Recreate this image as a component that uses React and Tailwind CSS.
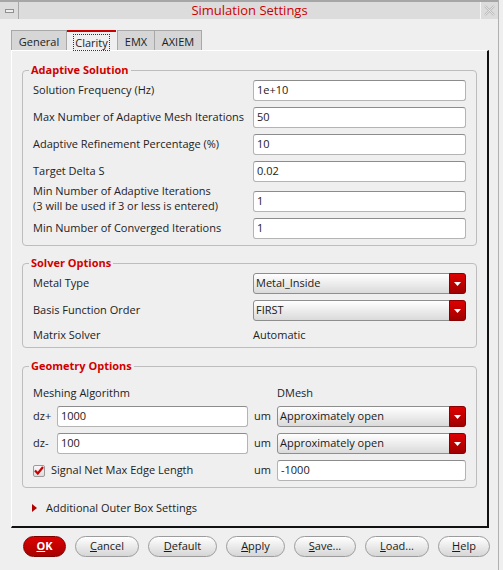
import React from 'react';

const font = { fontFamily: '"Open Sans", "Noto Sans", sans-serif' };

const TextBox = ({ value, className = '' }) => (
  <div className={`h-[21px] bg-white border border-[#b4b4b4] border-t-[#8c8c8c] rounded-[3px] flex items-center pl-[3px] text-[#1a1a1a] ${className}`}>
    {value}
  </div>
);

const Combo = ({ value, className = '' }) => (
  <div className={`h-[21px] flex rounded-[3px] border border-[#8e8e8e] bg-linear-to-b from-white to-[#dadada] ${className}`}>
    <div className="flex-1 flex items-center pl-[2px] text-[#1a1a1a]">{value}</div>
    <div className="w-[17px] -my-px -mr-px rounded-r-[3px] bg-linear-to-b from-[#e00000] to-[#a00000] border border-[#8a0000] flex items-center justify-center">
      <svg width="7" height="4" viewBox="0 0 7 4"><path d="M0 0h7L3.5 4z" fill="#fff" /></svg>
    </div>
  </div>
);

const Group = ({ title, className = '', children }) => (
  <fieldset className={`border border-[#bdbdbd] rounded-[4px] px-[10px] ${className}`}>
    <legend className="-ml-[4px] px-[2px] leading-[14px] text-[#d00000] font-bold">{title}</legend>
    {children}
  </fieldset>
);

const Row = ({ label, children, className = '' }) => (
  <div className={`flex items-center h-[21px] ${className}`}>
    <div className="w-[220px]">{label}</div>
    <div className="flex-1">{children}</div>
  </div>
);

const Btn = ({ w, first, rest }) => (
  <div className={`${w} h-[21px] rounded-full border border-[#9c9c9c] bg-linear-to-b from-white to-[#d6d6d6] flex items-center justify-center text-[#1a1a1a]`}>
    <span className="underline">{first}</span>{rest}
  </div>
);

export default function App() {
  return (
    <div style={font} className="w-[503px] h-[570px] bg-[#efefef] text-[11px] text-[#222] overflow-hidden flex">
      <div className="w-[499px] border-r border-[#b0b0b0] flex flex-col">
        {/* title bar */}
        <div className="h-[19px] border-t-2 border-[#a6a6a6] bg-[#dcdcdc] flex">
          <div className="w-[18px] ml-[1px] border-r border-[#a8a8a8] flex items-center justify-center">
            <div className="w-[9px] h-[4px] border border-[#909090] bg-[#eeeeee]" />
          </div>
          <div className="flex-1 flex items-center justify-center text-[13px] text-[#cc0000] leading-none">Simulation Settings</div>
          <div className="w-[18px] border-l border-[#f6f6f6] flex items-center justify-center">
            <svg width="11" height="11" viewBox="0 0 11 11">
              <path d="M1 1l9 9M10 1l-9 9" stroke="#bdbdbd" strokeWidth="2.4" />
              <path d="M1 1l9 9M10 1l-9 9" stroke="#ececec" strokeWidth="0.8" />
            </svg>
          </div>
        </div>

        <div className="pl-[11px] pt-[11px]">
          {/* tabs */}
          <div className="flex h-[20px] items-end">
            <div className="w-[56px] h-[20px] border border-b-0 border-[#a8a8a8] bg-[#d6d6d6] flex items-center justify-center pt-[4px]">General</div>
            <div className="w-[49px] h-[20px] border-t-2 border-[#cc0000] bg-[#efefef] flex items-center justify-center pt-[2px]">
              <span className="border border-dotted border-[#333] px-[1px] leading-[15px]">Clarity</span>
            </div>
            <div className="w-[38px] h-[20px] ml-px border border-b-0 border-[#a8a8a8] bg-[#d6d6d6] flex items-center justify-center pt-[4px]">EMX</div>
            <div className="w-[47px] h-[20px] border border-b-0 border-l-0 border-[#a8a8a8] bg-[#d6d6d6] flex items-center justify-center pt-[4px]">AXIEM</div>
          </div>

          {/* pane */}
          <div className="w-[478px] h-[478px] border-t border-l border-t-white border-l-white border-r-2 border-b-2 border-r-[#111] border-b-[#111] px-[10px] pt-[12px]">
            <Group title="Adaptive Solution" className="pb-[6px]">
              <Row label="Solution Frequency (Hz)" className="mt-[3px]"><TextBox value="1e+10" /></Row>
              <Row label="Max Number of Adaptive Mesh Iterations" className="mt-[6px]"><TextBox value="50" /></Row>
              <Row label="Adaptive Refinement Percentage (%)" className="mt-[6px]"><TextBox value="10" /></Row>
              <Row label="Target Delta S" className="mt-[6px]"><TextBox value="0.02" /></Row>
              <div className="flex items-end h-[29px] mt-px">
                <div className="w-[220px] leading-[15px] self-start">
                  Min Number of Adaptive Iterations<br />(3 will be used if 3 or less is entered)
                </div>
                <div className="flex-1"><TextBox value="1" /></div>
              </div>
              <Row label="Min Number of Converged Iterations" className="mt-[6px]"><TextBox value="1" /></Row>
            </Group>

            <Group title="Solver Options" className="mt-[10px] pb-[5px]">
              <Row label="Metal Type" className="mt-[3px]"><Combo value="Metal_Inside" /></Row>
              <Row label="Basis Function Order" className="mt-[6px]"><Combo value="FIRST" /></Row>
              <div className="flex items-center h-[14px] mt-[7px]">
                <div className="w-[220px]">Matrix Solver</div>
                <div className="flex-1">Automatic</div>
              </div>
            </Group>

            <Group title="Geometry Options" className="mt-[11px] pb-[6px]">
              <div className="flex items-center h-[14px] mt-[13px]">
                <div className="w-[244px]">Meshing Algorithm</div>
                <div className="flex-1">DMesh</div>
              </div>
              <div className="flex items-center h-[21px] mt-[6px]">
                <div className="w-[24px]">dz+</div>
                <TextBox value="1000" className="w-[191px]" />
                <div className="w-[29px] pl-[6px]">um</div>
                <Combo value="Approximately open" className="flex-1" />
              </div>
              <div className="flex items-center h-[21px] mt-[6px]">
                <div className="w-[24px]">dz-</div>
                <TextBox value="100" className="w-[191px]" />
                <div className="w-[29px] pl-[6px]">um</div>
                <Combo value="Approximately open" className="flex-1" />
              </div>
              <div className="flex items-center h-[21px] mt-[6px]">
                <div className="w-[215px] flex items-center">
                  <div className="w-[12px] h-[12px] border border-[#9a9a9a] rounded-[2px] bg-linear-to-b from-[#f8f8f8] to-[#dcdcdc] flex items-center justify-center mr-[6px]">
                    <svg width="10" height="9" viewBox="0 0 10 9"><path d="M1 4.5l2.8 3L9 1" stroke="#cc0000" strokeWidth="2.2" fill="none" /></svg>
                  </div>
                  Signal Net Max Edge Length
                </div>
                <div className="w-[29px] pl-[6px]">um</div>
                <TextBox value="-1000" className="flex-1" />
              </div>
            </Group>

            <div className="flex items-center h-[14px] mt-[13px] pl-[10px]">
              <svg width="5" height="8" viewBox="0 0 5 8" className="mr-[9px]"><path d="M0 0l5 4-5 4z" fill="#b00000" /></svg>
              Additional Outer Box Settings
            </div>
          </div>

          {/* buttons */}
          <div className="flex items-center gap-[9px] mt-[8px] pl-[12px]">
            <div className="w-[43px] h-[21px] rounded-full border border-[#800000] bg-linear-to-b from-[#dd0000] to-[#a80000] flex items-center justify-center text-white font-bold">
              <span className="underline">O</span>K
            </div>
            <Btn w="w-[64px]" first="C" rest="ancel" />
            <Btn w="w-[69px]" first="D" rest="efault" />
            <Btn w="w-[59px]" first="A" rest="pply" />
            <Btn w="w-[62px]" first="S" rest="ave..." />
            <Btn w="w-[64px]" first="L" rest="oad..." />
            <Btn w="w-[52px]" first="H" rest="elp" />
          </div>
        </div>
      </div>
    </div>
  );
}
